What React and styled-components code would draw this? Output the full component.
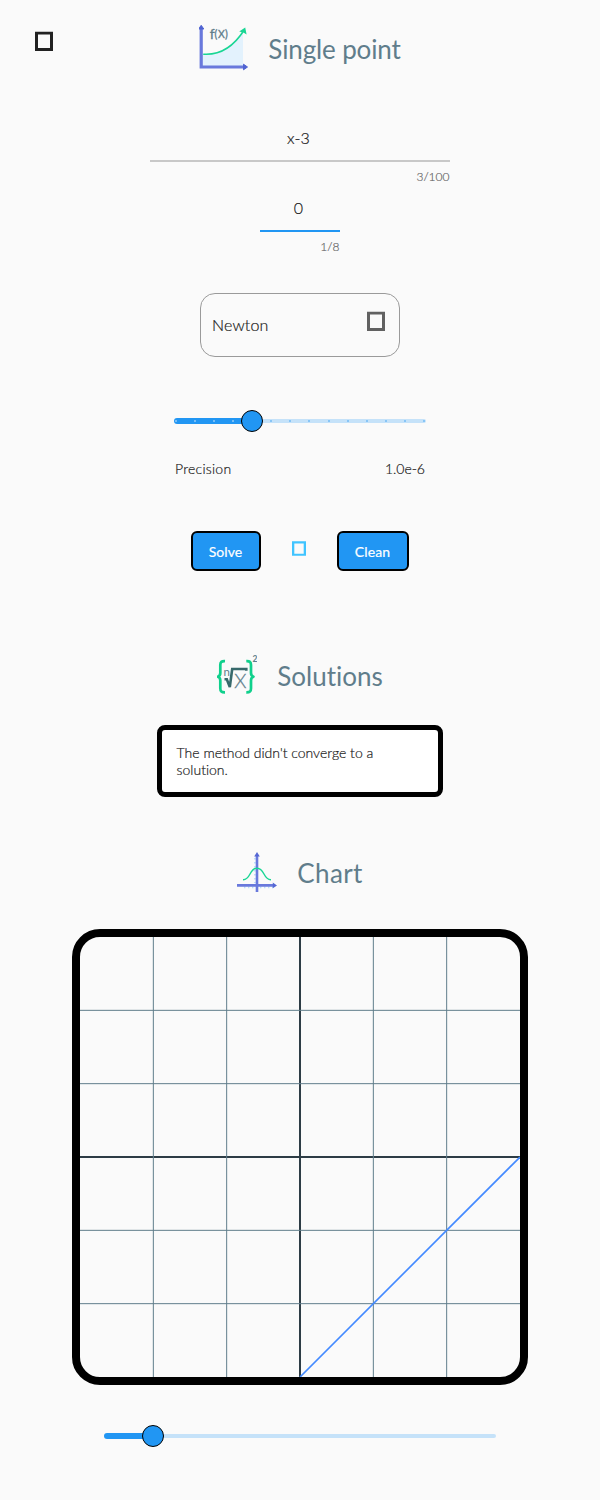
import React from "react";
import styled, { createGlobalStyle } from "styled-components";

const GlobalStyle = createGlobalStyle`
  * { box-sizing: border-box; }
  body {
    margin: 0;
    background: #fafafa;
    color: #1a1a1a;
    font-family: Lato, "Liberation Sans", sans-serif;
    font-weight: 300;
    font-variant-ligatures: none;
    -webkit-text-stroke: 0.2px;
  }
  svg { display: block; -webkit-text-stroke: 0; }
`;

const Page = styled.main`
  width: 600px;
  height: 1500px;
  display: flex;
  flex-direction: column;
  align-items: center;
  overflow: hidden;
`;

const Header = styled.header`
  width: 100%;
  height: 100px;
  display: grid;
  grid-template-columns: 1fr auto 1fr;
  align-items: start;
  padding: 22px 35px 0;
`;

const MenuButton = styled.button`
  border: 0;
  padding: 9px 0 0;
  background: none;
  justify-self: start;
`;

const Title = styled.div`
  height: ${(p) => p.$height || 50}px;
  display: flex;
  align-items: center;
  gap: ${(p) => p.$gap || 20}px;
`;

const TitleText = styled.h1`
  margin: 0;
  font-size: 26px;
  line-height: 32px;
  font-weight: 400;
  -webkit-text-stroke: 0;
  letter-spacing: ${(p) => p.$spacing || 0}px;
  color: #607d8b;
  padding-top: ${(p) => p.$drop || 0}px;
`;

const Field = styled.label`
  width: ${(p) => p.$width}px;
  height: 70px;
  display: flex;
  flex-direction: column;
`;

const FieldValue = styled.span`
  height: 44px;
  padding: 10px 3px 0 0;
  border-bottom: 2px solid ${(p) => (p.$active ? "#2196f3" : "#c8c8c8")};
  text-align: center;
  font-size: 16px;
  line-height: 20px;
  letter-spacing: 0.15px;
`;

const Counter = styled.span`
  padding: 7px 0.5px 0 0;
  text-align: right;
  font-size: 12px;
  line-height: 16px;
  color: #666;
`;

const Select = styled.div`
  width: 200px;
  height: 64px;
  margin-top: 35px;
  padding: 0 14px 0 11px;
  display: flex;
  justify-content: space-between;
  border: 1px solid #9a9a9a;
  border-radius: 15px;
  font-size: 16px;
  line-height: 62px;
  letter-spacing: 0.15px;
`;

const SelectIcon = styled.span`
  padding-top: 17px;
`;

const SliderBox = styled.div`
  position: relative;
  width: ${(p) => p.$width}px;
  height: 22px;
  margin-top: ${(p) => p.$top}px;
  display: flex;
  align-items: center;
`;

const ActiveTrack = styled.div`
  height: 6px;
  border-radius: 3px 0 0 3px;
  background: #2196f3;
`;

const InactiveTrack = styled.div`
  flex: 1;
  height: 4px;
  border-radius: 0 2px 2px 0;
  background: #c5e2f9;
`;

const Ticks = styled.div`
  position: absolute;
  inset: 10px 1px;
  display: flex;
  justify-content: space-between;
`;

const Tick = styled.span`
  width: 2px;
  height: 2px;
  border-radius: 1px;
  background: ${(p) => (p.$active ? "#90caf9" : "#73bbf5")};
`;

const Thumb = styled.div`
  position: absolute;
  top: 0;
  width: 22px;
  height: 22px;
  margin-left: -11px;
  border: 1px solid #000;
  border-radius: 50%;
  background: #2196f3;
`;

const PrecisionRow = styled.div`
  width: 250px;
  margin-top: 27px;
  height: 20px;
  display: flex;
  justify-content: space-between;
  font-size: 14px;
  line-height: 20px;
`;

const PrecisionLabel = styled.span`
  letter-spacing: 0.25px;
`;

const Actions = styled.div`
  width: 218px;
  height: 40px;
  margin-top: 52px;
  display: flex;
  justify-content: space-between;
`;

const Button = styled.button`
  width: ${(p) => p.$width}px;
  height: 40px;
  padding: 2px 1px 0 0;
  border: 2px solid #000;
  border-radius: 6px;
  background: #2196f3;
  color: #fff;
  font: 400 14px/20px Lato, "Liberation Sans", sans-serif;
  letter-spacing: 0.1px;
`;

const ActionIcon = styled.span`
  padding-top: 10px;
`;

const Section = styled.section`
  margin-top: ${(p) => p.$top}px;
  display: flex;
  flex-direction: column;
  align-items: center;
`;

const Message = styled.p`
  width: 286px;
  height: 72px;
  margin: 30px 0 0;
  padding: 14px 14px 14px 14.6px;
  border: 5px solid #000;
  border-radius: 8px;
  background: #fff;
  font-size: 14px;
  line-height: 17px;
`;

const MessageText = styled.span`
  display: block;
  width: 215px;
`;

const ChartFrame = styled.div`
  width: 456px;
  height: 456px;
  margin-top: 37px;
  border: 8px solid #000;
  border-radius: 28px;
  overflow: hidden;
`;

const MissingGlyph = ({ color }) => (
  <svg width="18" height="20" viewBox="0 0 18 20">
    <path fill={color} fillRule="evenodd" d="M0 .8H18V20H0ZM3 3.5V17H15V3.5Z" />
  </svg>
);

const SmallGlyph = () => (
  <svg width="14" height="15" viewBox="0 0 14 15">
    <path fill="#40c4ff" fillRule="evenodd" d="M0 .3H14V14.8H0ZM2.3 2.4V12.7H11.7V2.4Z" />
  </svg>
);

const FunctionIcon = () => (
  <svg width="50" height="50" viewBox="0 0 50 50">
    <path fill="#e3f2fd" d="M3 32C21 34 34 23 44 9V44H3Z" />
    <path fill="none" stroke="#6979dc" strokeWidth="3.2" d="M2.2 7V45H46" />
    <path fill="#4f63d2" stroke="#4f63d2" strokeLinejoin="round" d="M2.2 3.3 4.8 7H-.4ZM48.5 45 44.5 47.8V42.2Z" />
    <path fill="none" stroke="#19d694" strokeWidth="1.5" d="M4.2 32.2C22 33.5 35 24 45.2 8" />
    <path fill="#19d694" d="M46.2 5.6 47.6 12.6 44.4 10.4 40.2 9.5Z" />
    <text x="10.8" y="17.4" fontSize="14" fontWeight="400" fill="#607d8b" stroke="#607d8b" strokeWidth=".3">f</text>
    <text x="15.6" y="15.9" fontSize="10.5" fontWeight="400" fill="#607d8b" stroke="#607d8b" strokeWidth=".3">(</text>
    <text x="19" y="15.9" fontSize="10.5" fontWeight="400" fill="#607d8b" stroke="#607d8b" strokeWidth=".3">X</text>
    <text x="26" y="15.9" fontSize="10.5" fontWeight="400" fill="#607d8b" stroke="#607d8b" strokeWidth=".3">)</text>
  </svg>
);

const RootIcon = () => (
  <svg width="40" height="40" viewBox="0 0 40 40">
    <g fill="none" stroke="#10d08c" strokeWidth="2.7" strokeLinejoin="round">
      <path d="M8 6.2C4.5 6 3.3 7 3.3 10V18Q3.3 21 .8 21.7Q3.3 22.4 3.3 25.5V33.2C3.3 36.5 4.5 37.5 8 37.4" />
      <path d="M29.3 6.2C32.8 6 34 7 34 10V18Q34 21 36.5 21.7Q34 22.4 34 25.5V33.2C34 36.5 32.8 37.5 29.3 37.4" />
    </g>
    <path fill="none" stroke="#37696b" strokeWidth="2.6" d="M7.5 24.2H9.8L12.8 32L15.2 14H29.3V15.8" />
    <text x="6.4" y="20.8" fontSize="11.5" fontWeight="400" fill="#607d8b">n</text>
    <text x="17.2" y="32.6" fontSize="19.5" fill="#607d8b" stroke="#607d8b" strokeWidth=".3">X</text>
    <text x="35.5" y="6.8" fontSize="8.5" fontWeight="700" fill="#607d8b">2</text>
  </svg>
);

const BellCurveIcon = () => (
  <svg width="40" height="40" viewBox="0 0 40 40">
    <path fill="none" stroke="#b8dcfb" strokeWidth="1.6" strokeDasharray="1.4 2.6" d="M17.9 6V31M7 35.4H36" />
    <path fill="none" stroke="#6979dc" strokeWidth="2.6" d="M20 3V40M0 33.4H37" />
    <path fill="#5567d4" d="M20 0 22.8 4.5H17.2ZM40 33.4 35.8 36.3V30.5Z" />
    <path fill="none" stroke="#19d694" strokeWidth="1.4" d="M6 27.7C14 28 12 16.2 20 16.2S26 28 34 27.7" />
  </svg>
);

const STEP = 440 / 6;
const LINES = [1, 2, 4, 5].map((n) => n * STEP);

const Chart = () => (
  <svg width="440" height="440" viewBox="0 0 440 440">
    <path stroke="#2d3c45" strokeWidth="2" d="M220 0V440M0 220H440" />
    {LINES.map((p) => (
      <path key={p} stroke="#607d8b" strokeWidth="1" d={`M${p} 0V440M0 ${p}H440`} />
    ))}
    <path stroke="#448aff" strokeWidth="1.7" d="M220 440L440 220" />
  </svg>
);

const Slider = ({ width, top, value, ticks = 0 }) => (
  <SliderBox $width={width} $top={top}>
    <ActiveTrack style={{ width: `${value * 100}%` }} />
    <InactiveTrack />
    {ticks > 0 && (
      <Ticks>
        {Array.from({ length: ticks }, (_, i) => (
          <Tick key={i} $active={i / (ticks - 1) <= value} />
        ))}
      </Ticks>
    )}
    <Thumb style={{ left: `${value * 100}%` }} />
  </SliderBox>
);

export default function App() {
  return (
    <Page>
      <GlobalStyle />
      <Header>
        <MenuButton aria-label="Menu">
          <MissingGlyph color="#212121" />
        </MenuButton>
        <Title $gap={19}>
          <FunctionIcon />
          <TitleText $drop={3} $spacing={-0.13}>Single point</TitleText>
        </Title>
      </Header>

      <Section $top={18}>
        <Field $width={300}>
          <FieldValue>x-3</FieldValue>
          <Counter>3/100</Counter>
        </Field>
        <Field $width={80}>
          <FieldValue $active>0</FieldValue>
          <Counter>1/8</Counter>
        </Field>
        <Select>
          Newton
          <SelectIcon>
            <MissingGlyph color="#616161" />
          </SelectIcon>
        </Select>
      </Section>

      <Slider width={252} top={53} value={4 / 13} ticks={14} />
      <PrecisionRow>
        <PrecisionLabel>Precision</PrecisionLabel>
        <span>1.0e-6</span>
      </PrecisionRow>

      <Actions>
        <Button $width={70}>Solve</Button>
        <ActionIcon>
          <SmallGlyph />
        </ActionIcon>
        <Button $width={72}>Clean</Button>
      </Actions>

      <Section $top={84}>
        <Title $height={40}>
          <RootIcon />
          <TitleText $drop={2}>Solutions</TitleText>
        </Title>
        <Message>
          <MessageText>The method didn't converge to a solution.</MessageText>
        </Message>
      </Section>

      <Section $top={55}>
        <Title $height={40}>
          <BellCurveIcon />
          <TitleText $drop={2} $spacing={0.4}>Chart</TitleText>
        </Title>
        <ChartFrame>
          <Chart />
        </ChartFrame>
      </Section>

      <Slider width={392} top={40} value={1 / 8} />
    </Page>
  );
}
